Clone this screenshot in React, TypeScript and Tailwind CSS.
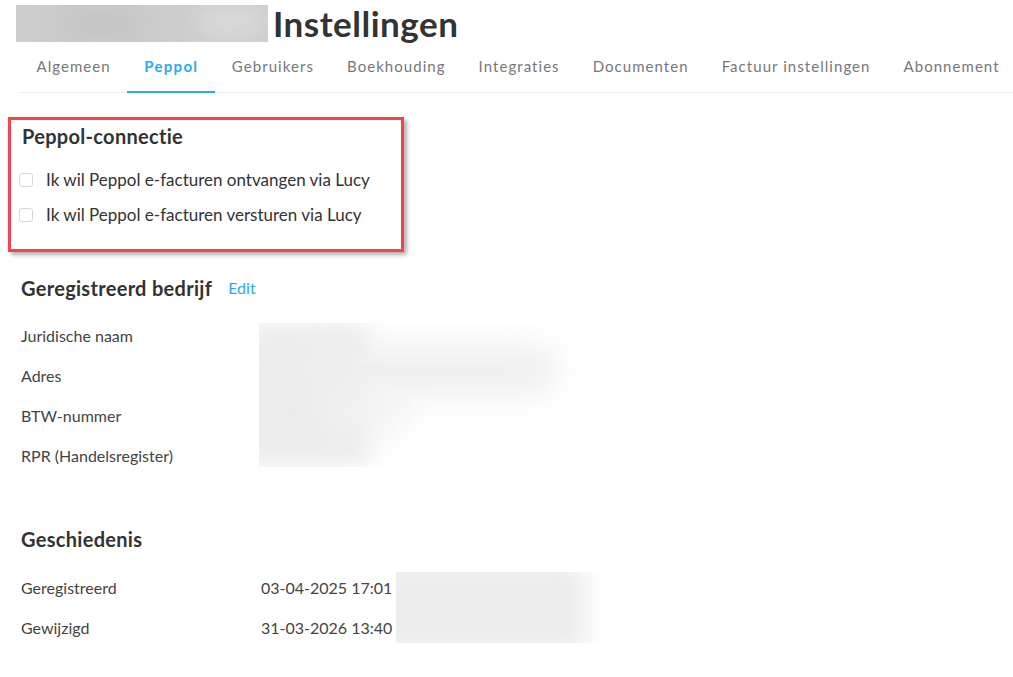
const tabs = [
  "Algemeen",
  "Peppol",
  "Gebruikers",
  "Boekhouding",
  "Integraties",
  "Documenten",
  "Factuur instellingen",
  "Abonnement",
];

const company = ["Juridische naam", "Adres", "BTW-nummer", "RPR (Handelsregister)"];

const history = [
  { label: "Geregistreerd", value: "03-04-2025 17:01" },
  { label: "Gewijzigd", value: "31-03-2026 13:40" },
];

function Checkbox({ label }: { label: string }) {
  return (
    <label className="-ml-[3px] flex h-[24px] items-center gap-[13px] text-[17px] text-[#333]">
      <span className="h-[14px] w-[14px] rounded-[3px] border border-[#d6d6d6] bg-white" />
      {label}
    </label>
  );
}

export default function App() {
  return (
    <div className="min-h-[677px] overflow-hidden bg-white font-['Lato',sans-serif] text-[#333]">
      <header className="flex items-center gap-[5px] pl-4 pt-[5px]">
        <div className="relative h-[37px] w-[252px] overflow-hidden bg-[#cdcdcd]">
          <div className="absolute left-[40px] top-[4px] h-[30px] w-[90px] rounded-full bg-[#c4c4c4] blur-md" />
          <div className="absolute left-[180px] top-[2px] h-[30px] w-[70px] rounded-full bg-[#dadada] blur-md" />
        </div>
        <h1 className="text-[35px] font-bold leading-[37px] tracking-[0.5px] text-[#333]">Instellingen</h1>
      </header>

      <nav className="ml-[20px] mt-[11px] flex whitespace-nowrap border-b border-[#ececec]">
        {tabs.map((t) => (
          <div
            key={t}
            className={
              t === "Peppol"
                ? "-mb-px shrink-0 border-b-2 border-[#2ba9f3] px-[17px] pb-[13px] pt-[2px] text-[15px] font-bold tracking-[1.3px] text-[#2ba9f3]"
                : "-mb-px shrink-0 border-b-2 border-transparent px-[16.5px] pb-[13px] pt-[2px] text-[15px] tracking-[1.05px] text-[#777]"
            }
          >
            {t}
          </div>
        ))}
      </nav>

      <section className="ml-[8px] mt-[24px] w-[396px] border-[3px] border-[#f4434b] px-[11px] pb-[22px] pt-[3px] shadow-[3px_3px_4px_rgba(0,0,0,0.3)]">
        <h2 className="text-[20px] font-bold leading-[26px] tracking-[0.3px] text-[#333]">Peppol-connectie</h2>
        <div className="mt-[19px] flex flex-col gap-[11px]">
          <Checkbox label="Ik wil Peppol e-facturen ontvangen via Lucy" />
          <Checkbox label="Ik wil Peppol e-facturen versturen via Lucy" />
        </div>
      </section>

      <section className="ml-[21px] mt-[23px]">
        <div className="flex h-[26px] items-center gap-[16px]">
          <h2 className="text-[20px] font-bold leading-[26px] tracking-[0.3px] text-[#333]">Geregistreerd bedrijf</h2>
          <a className="text-[16px] text-[#2ba9f3]">Edit</a>
        </div>
        <div className="mt-[15px] flex">
          <div className="flex w-[238px] flex-col">
            {company.map((c) => (
              <div key={c} className="flex h-[40px] items-center text-[16px] text-[#444]">
                {c}
              </div>
            ))}
          </div>
          <div className="relative mt-[7px] h-[144px] w-[320px] overflow-hidden">
            <div className="absolute -left-[20px] top-0 h-[144px] w-[130px] bg-[#ececed] blur-md" />
            <div className="absolute left-[40px] top-[22px] h-[50px] w-[260px] rounded-full bg-[#efeff0] blur-lg" />
            <div className="absolute left-[60px] top-[70px] h-[40px] w-[90px] rounded-full bg-[#f2f2f3] blur-lg" />
          </div>
        </div>
      </section>

      <section className="ml-[21px] mt-[50px]">
        <h2 className="text-[20px] font-bold leading-[26px] tracking-[0.3px] text-[#333]">Geschiedenis</h2>
        <div className="mt-[16px] flex">
          <div className="flex flex-col">
            {history.map((h) => (
              <div key={h.label} className="flex h-[40px] items-center text-[16px] text-[#444]">
                <span className="w-[240px]">{h.label}</span>
                <span>{h.value}</span>
              </div>
            ))}
          </div>
          <div className="relative ml-[4px] mt-[4px] h-[71px] w-[212px] overflow-hidden">
            <div className="absolute -left-[20px] -top-[10px] h-[91px] w-[210px] bg-[#ececed] blur-md" />
          </div>
        </div>
      </section>
    </div>
  );
}
